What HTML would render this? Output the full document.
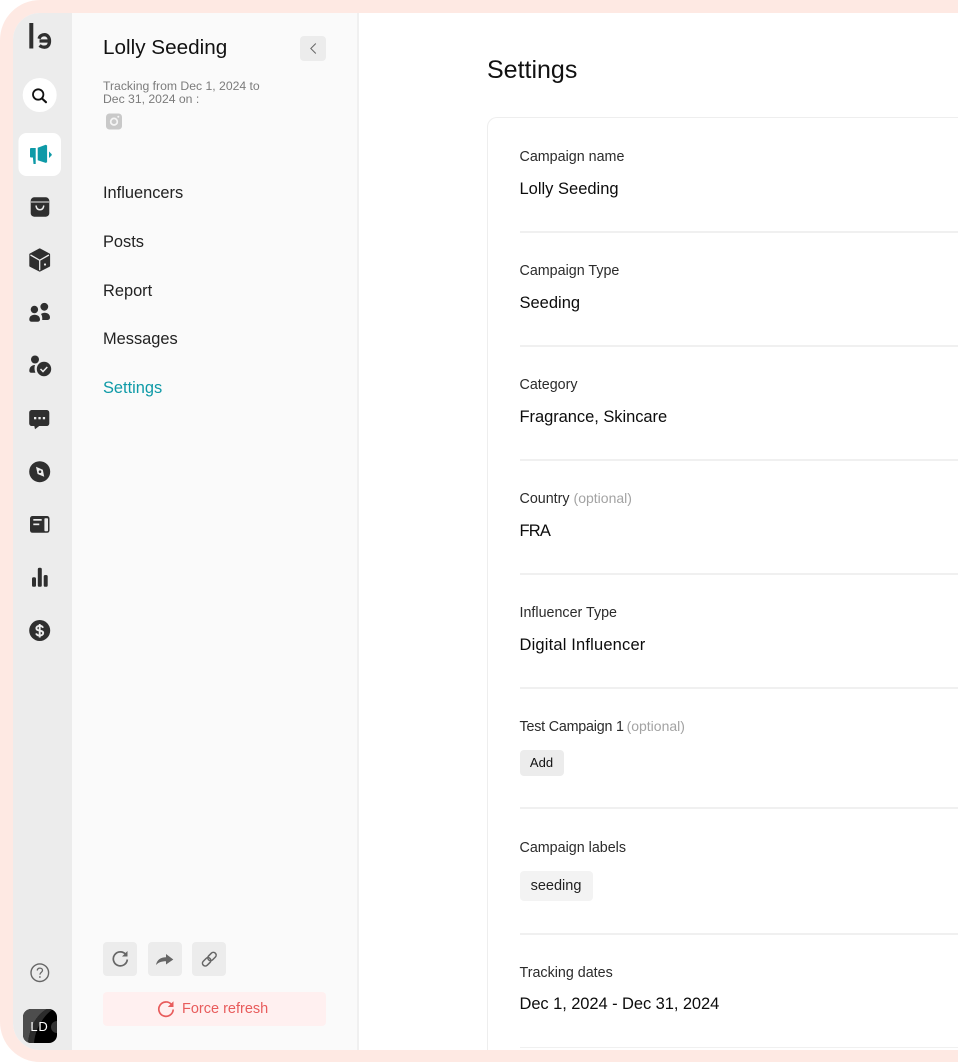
<!DOCTYPE html>
<html lang="en">
<head>
<meta charset="utf-8">
<title>Settings</title>
<style>
html,body{margin:0;padding:0;background:#fff;width:958px;height:1063px;overflow:hidden}
body{font-family:"Liberation Sans",sans-serif;color:#000}
#root{position:relative;width:958px;height:1063px;overflow:hidden;contain:paint}
#frame{position:absolute;left:0;top:0;width:958px;height:1062px;background:#fee9e3;border-radius:40px 0 0 40px}
#inner{position:absolute;left:13px;top:13px;width:945px;height:1037px;background:#fff;border-radius:27px 0 0 27px;overflow:hidden}
#rail{position:absolute;left:0;top:0;width:59px;height:1037px;background:#ececec}
#side{position:absolute;left:59px;top:0;width:285px;height:1037px;background:#fafafa;border-right:2px solid #f0f0f0}
#card{position:absolute;left:474px;top:104px;width:471px;height:933px;border:solid #eeeeee;border-width:1.5px 0 0 1.5px;border-radius:10px 0 0 0;box-sizing:border-box}
.t{position:absolute;white-space:nowrap;line-height:1}
.abs{position:absolute}
svg{position:absolute;display:block}
.nav{font-size:16.4px;color:#222;left:103px}
.lab{font-size:14.3px;color:#2b2b2b;left:519.5px}
.val{font-size:16.5px;color:#0c0c0c;left:519.5px}
.opt{color:#a3a3a3;font-size:14px;letter-spacing:0}
.hr{position:absolute;left:519.5px;width:438.5px;height:1.5px;background:#f0f0f0}
.ib{position:absolute;top:942px;width:34px;height:34px;background:#ececec;border-radius:4px}
</style>
</head>
<body>
<div id="root">
<div id="frame"></div>
<div id="inner"><div id="rail"></div><div id="side"></div><div id="card"></div></div>

<!-- rail icons -->
<svg style="left:0;top:0" width="72" height="1063" viewBox="0 0 72 1063">
  <!-- logo -->
  <rect x="29.300" y="23" width="4" height="25.500" fill="#2f2f2f"/>
  <path d="M39.500 45.500c1.300 1 3 1.700 5 1.700 3.400 0 5-2.700 5-6.200s-2-6.300-5-6.300c-2.700 0-4.800 1.500-5.400 4M39.500 41h9.500" fill="none" stroke="#2f2f2f" stroke-width="3.300"/>
  <!-- search -->
  <circle cx="39.700" cy="95" r="17" fill="#fff"/>
  <circle cx="38.200" cy="94.500" r="5.200" fill="none" stroke="#111" stroke-width="1.800"/>
  <path d="M42 98.500l4 3.700" stroke="#111" stroke-width="2.100" stroke-linecap="round"/>
  <!-- campaign -->
  <rect x="18.500" y="133" width="42.500" height="43" rx="8" fill="#fff"/>
  <path d="M31 148h4.700v16h-2.200l-.6-6.500H31c-.7 0-1-.4-1-1v-7.500c0-.6.400-1 1-1z" fill="#0e9aa7"/>
  <path d="M37.700 147.800l8-3 1.400.7v16.800l-1.400.6-8-2.700z" fill="#0e9aa7"/>
  <path d="M49 151.500l2.500 2.500c.4.500.4 1 0 1.500l-2.500 2.500z" fill="#0e9aa7"/>
  <!-- bag -->
  <rect x="30.700" y="197.300" width="18.600" height="19.400" rx="3.500" fill="#2f2f2f"/>
  <path d="M31 202h18" stroke="#ececec" stroke-width=".9"/>
  <path d="M36 205.500c.4 3 1.800 4.300 3.900 4.300s3.500-1.300 3.900-4.300" fill="none" stroke="#ececec" stroke-width="1.500"/>
  <!-- box -->
  <path d="M39.700 249.500l9.300 5v11.300l-9.300 4.700-9.300-4.700v-11.300z" fill="#2f2f2f" stroke="#2f2f2f" stroke-width="2.200" stroke-linejoin="round"/>
  <path d="M30.500 255l9.200 5.300 9.200-5.300M39.700 260.300v10" fill="none" stroke="#ececec" stroke-width="1.300"/>
  <circle cx="45" cy="264.500" r="1.100" fill="#ececec"/>
  <!-- people -->
  <circle cx="44.300" cy="306.800" r="3.900" fill="#2f2f2f"/>
  <circle cx="34.400" cy="309.500" r="3.700" fill="#2f2f2f"/>
  <path d="M29.300 319.500c0-3 2.200-4.700 5.300-4.700s5.400 1.700 5.400 4.700c0 1.500-1 2.200-2.500 2.200h-5.800c-1.500 0-2.400-.7-2.400-2.200z" fill="#2f2f2f"/>
  <path d="M41 314c1-.9 2.200-1.300 3.600-1.300 3.200 0 5.400 1.900 5.400 4.700 0 1.700-1 2.600-2.500 2.600h-5.300c.3-2.500-.1-4.500-1.200-6z" fill="#2f2f2f"/>
  <!-- person check -->
  <circle cx="35" cy="359.500" r="4" fill="#2f2f2f"/>
  <path d="M29.300 370.700c0-3 1.800-5.500 5.700-5.700-.8 2.200-.6 5.400.4 7.700h-4.200c-1.200 0-1.900-.8-1.900-2z" fill="#2f2f2f"/>
  <circle cx="44" cy="369" r="7.600" fill="#2f2f2f" stroke="#ececec" stroke-width=".8"/>
  <path d="M40.500 369l2.500 2.500 4.300-4.500" fill="none" stroke="#ececec" stroke-width="1.500"/>
  <!-- chat -->
  <path d="M32 410h14.500c1.700 0 2.800 1.100 2.800 2.800v10.400c0 1.700-1.100 2.800-2.800 2.800h-7.300l-4.200 3.300-.7-3.300H32c-1.700 0-2.800-1.100-2.800-2.800v-10.400c0-1.700 1.100-2.800 2.800-2.800z" fill="#2f2f2f"/>
  <rect x="34" y="417" width="2.300" height="2.300" fill="#ececec"/>
  <rect x="38.400" y="417" width="2.300" height="2.300" fill="#ececec"/>
  <rect x="42.800" y="417" width="2.300" height="2.300" fill="#ececec"/>
  <!-- compass -->
  <circle cx="39.700" cy="471.700" r="10.500" fill="#2f2f2f"/>
  <path d="M36 466.800l6.800 2.900 1.400 7-6.600-2.700z" fill="#ececec"/>
  <circle cx="40" cy="471.700" r="1.300" fill="#2f2f2f"/>
  <!-- news -->
  <rect x="30" y="516" width="19.500" height="16.800" rx="2.500" fill="#2f2f2f"/>
  <rect x="44.400" y="518.200" width="3.600" height="13" rx=".8" fill="#ececec"/>
  <rect x="33.300" y="519" width="8.400" height="1.700" fill="#ececec"/>
  <rect x="33.300" y="523.500" width="6" height="1.700" fill="#ececec"/>
  <!-- bars -->
  <rect x="32" y="577.300" width="4" height="9.500" rx="1.600" fill="#2f2f2f"/>
  <rect x="37.800" y="567.700" width="4" height="19.100" rx="1.600" fill="#2f2f2f"/>
  <rect x="43.700" y="575" width="4" height="11.800" rx="1.600" fill="#2f2f2f"/>
  <!-- dollar -->
  <circle cx="39.700" cy="630.500" r="10.500" fill="#2f2f2f"/>
  <path d="M43 627.800c-.5-1.300-1.800-2-3.300-2-2 0-3.300 1-3.300 2.400 0 3.400 6.800 1.500 6.800 4.800 0 1.500-1.500 2.500-3.500 2.500-1.700 0-3.100-.7-3.600-2.100M39.700 624v13.500" fill="none" stroke="#ececec" stroke-width="1.900"/>
  <!-- help -->
  <circle cx="39.800" cy="972.700" r="8.800" fill="none" stroke="#666" stroke-width="1.400"/>
  <path d="M37.200 970.500c.2-1.500 1.300-2.400 2.700-2.400 1.500 0 2.600 1 2.600 2.300 0 2-2.600 2-2.600 4.200" fill="none" stroke="#666" stroke-width="1.300"/>
  <circle cx="39.900" cy="977" r=".9" fill="#666"/>
</svg>

<!-- avatar -->
<div class="abs" style="left:23px;top:1009px;width:34px;height:34px;border-radius:8px;overflow:hidden;background:#000">
  <svg style="left:0;top:0" width="34" height="34" viewBox="0 0 34 34">
    <path d="M0 0h24C13 6 7 18 5 34H0z" fill="#4d4d4d"/>
    <path d="M24 0C13 6 7 18 5 34h6C12 21 19 8 30 0z" fill="#2c2c2c"/>
    <path d="M34 12a6 6 0 0 0 0 12z" fill="#333"/>
  </svg>
  <div class="t" style="left:0;width:33px;text-align:center;top:10.500px;font-size:13px;color:#fff;letter-spacing:.8px">LD</div>
</div>

<!-- sidebar head -->
<div class="t" style="left:103px;top:37.500px;font-size:20.700px;color:#111">Lolly Seeding</div>
<div class="abs" style="left:300px;top:36px;width:26px;height:25px;background:#ececec;border-radius:4px"></div>
<svg style="left:300px;top:36px" width="26" height="25" viewBox="0 0 26 25"><path d="M15.800 7.500l-5 5 5 5" fill="none" stroke="#666" stroke-width="1"/></svg>
<div class="t" style="left:103px;top:80px;font-size:12.200px;color:#7b7b7b">Tracking from Dec 1, 2024 to</div>
<div class="t" style="left:103px;top:93px;font-size:12.200px;color:#7b7b7b">Dec 31, 2024 on :</div>
<svg style="left:106px;top:113px" width="16" height="17" viewBox="0 0 16 17">
  <rect x="0" y="0.500" width="16" height="16" rx="3.500" fill="#c9c9c9"/>
  <circle cx="8" cy="8.700" r="3.300" fill="none" stroke="#f5f5f5" stroke-width="1.700"/>
  <circle cx="12.300" cy="3.800" r="1" fill="#f5f5f5"/>
</svg>

<!-- nav -->
<div class="t nav" style="top:185px">Influencers</div>
<div class="t nav" style="top:234px">Posts</div>
<div class="t nav" style="top:283px">Report</div>
<div class="t nav" style="top:331px">Messages</div>
<div class="t nav" style="top:380px;color:#0e9aa7">Settings</div>

<!-- bottom sidebar buttons -->
<div class="ib" style="left:103px"></div>
<div class="ib" style="left:148px"></div>
<div class="ib" style="left:192px"></div>
<svg style="left:103px;top:942px" width="123" height="34" viewBox="0 0 123 34">
  <path d="M22.800 12.500A7 7 0 1 0 24.300 17.500" fill="none" stroke="#666" stroke-width="1.700"/>
  <path d="M24.500 9v5.500h-5.500z" fill="#666"/>
  <path d="M53 23c.8-5 4.500-7.800 10-7.800V12l7.300 5.500-7.300 5v-3.300c-4.500 0-7.500 1-10 3.800z" fill="#666"/>
  <g transform="rotate(-45 106.300 17.200)" fill="none" stroke="#666" stroke-width="1.500">
    <rect x="97.800" y="14.400" width="9.500" height="5.600" rx="2.800"/>
    <rect x="105.300" y="14.400" width="9.500" height="5.600" rx="2.800"/>
  </g>
</svg>
<div class="abs" style="left:103px;top:992px;width:223px;height:34px;background:#fff0f0;border-radius:4px"></div>
<svg style="left:157px;top:1000px" width="18" height="18" viewBox="0 0 18 18">
  <path d="M14.500 4.500A7.200 7.200 0 1 0 16.200 9.500" fill="none" stroke="#e85c5c" stroke-width="1.700"/>
  <path d="M16.500 1.300v5.700h-5.700z" fill="#e85c5c"/>
</svg>
<div class="t" style="left:182px;top:1002px;font-size:14.500px;color:#e85c5c">Force refresh</div>

<!-- main -->
<div class="t" style="left:487px;top:58px;font-size:25px;color:#111">Settings</div>

<div class="t lab" style="top:150px">Campaign name</div>
<div class="t val" style="top:180.500px">Lolly Seeding</div>
<div class="hr" style="top:231px"></div>

<div class="t lab" style="top:263.500px">Campaign Type</div>
<div class="t val" style="top:294.500px">Seeding</div>
<div class="hr" style="top:345px"></div>

<div class="t lab" style="top:377.500px">Category</div>
<div class="t val" style="top:408.500px;letter-spacing:-.05px">Fragrance, Skincare</div>
<div class="hr" style="top:459px"></div>

<div class="t lab" style="top:491px">Country <span class="opt">(optional)</span></div>
<div class="t val" style="top:522.500px;letter-spacing:-.8px">FRA</div>
<div class="hr" style="top:573px"></div>

<div class="t lab" style="top:605.500px">Influencer Type</div>
<div class="t val" style="top:636.500px;letter-spacing:.17px">Digital Influencer</div>
<div class="hr" style="top:687px"></div>

<div class="t lab" style="top:719px;letter-spacing:-.2px">Test Campaign 1 <span class="opt" style="margin-left:-1px">(optional)</span></div>
<div class="abs" style="left:519.500px;top:750px;width:44px;height:26px;background:#ececec;border-radius:4px"></div>
<div class="t" style="left:519.500px;width:44px;text-align:center;top:756px;font-size:13px;color:#111">Add</div>
<div class="hr" style="top:807px"></div>

<div class="t lab" style="top:841px">Campaign labels</div>
<div class="abs" style="left:519.500px;top:871px;width:73px;height:30px;background:#f3f3f3;border-radius:4px"></div>
<div class="t" style="left:519.500px;width:73px;text-align:center;top:879px;font-size:14.500px;color:#222">seeding</div>
<div class="hr" style="top:933px"></div>

<div class="t lab" style="top:966px">Tracking dates</div>
<div class="t val" style="top:996px;letter-spacing:-.08px">Dec 1, 2024 - Dec 31, 2024</div>
<div class="hr" style="top:1046.500px"></div>
</div>
</body>
</html>
